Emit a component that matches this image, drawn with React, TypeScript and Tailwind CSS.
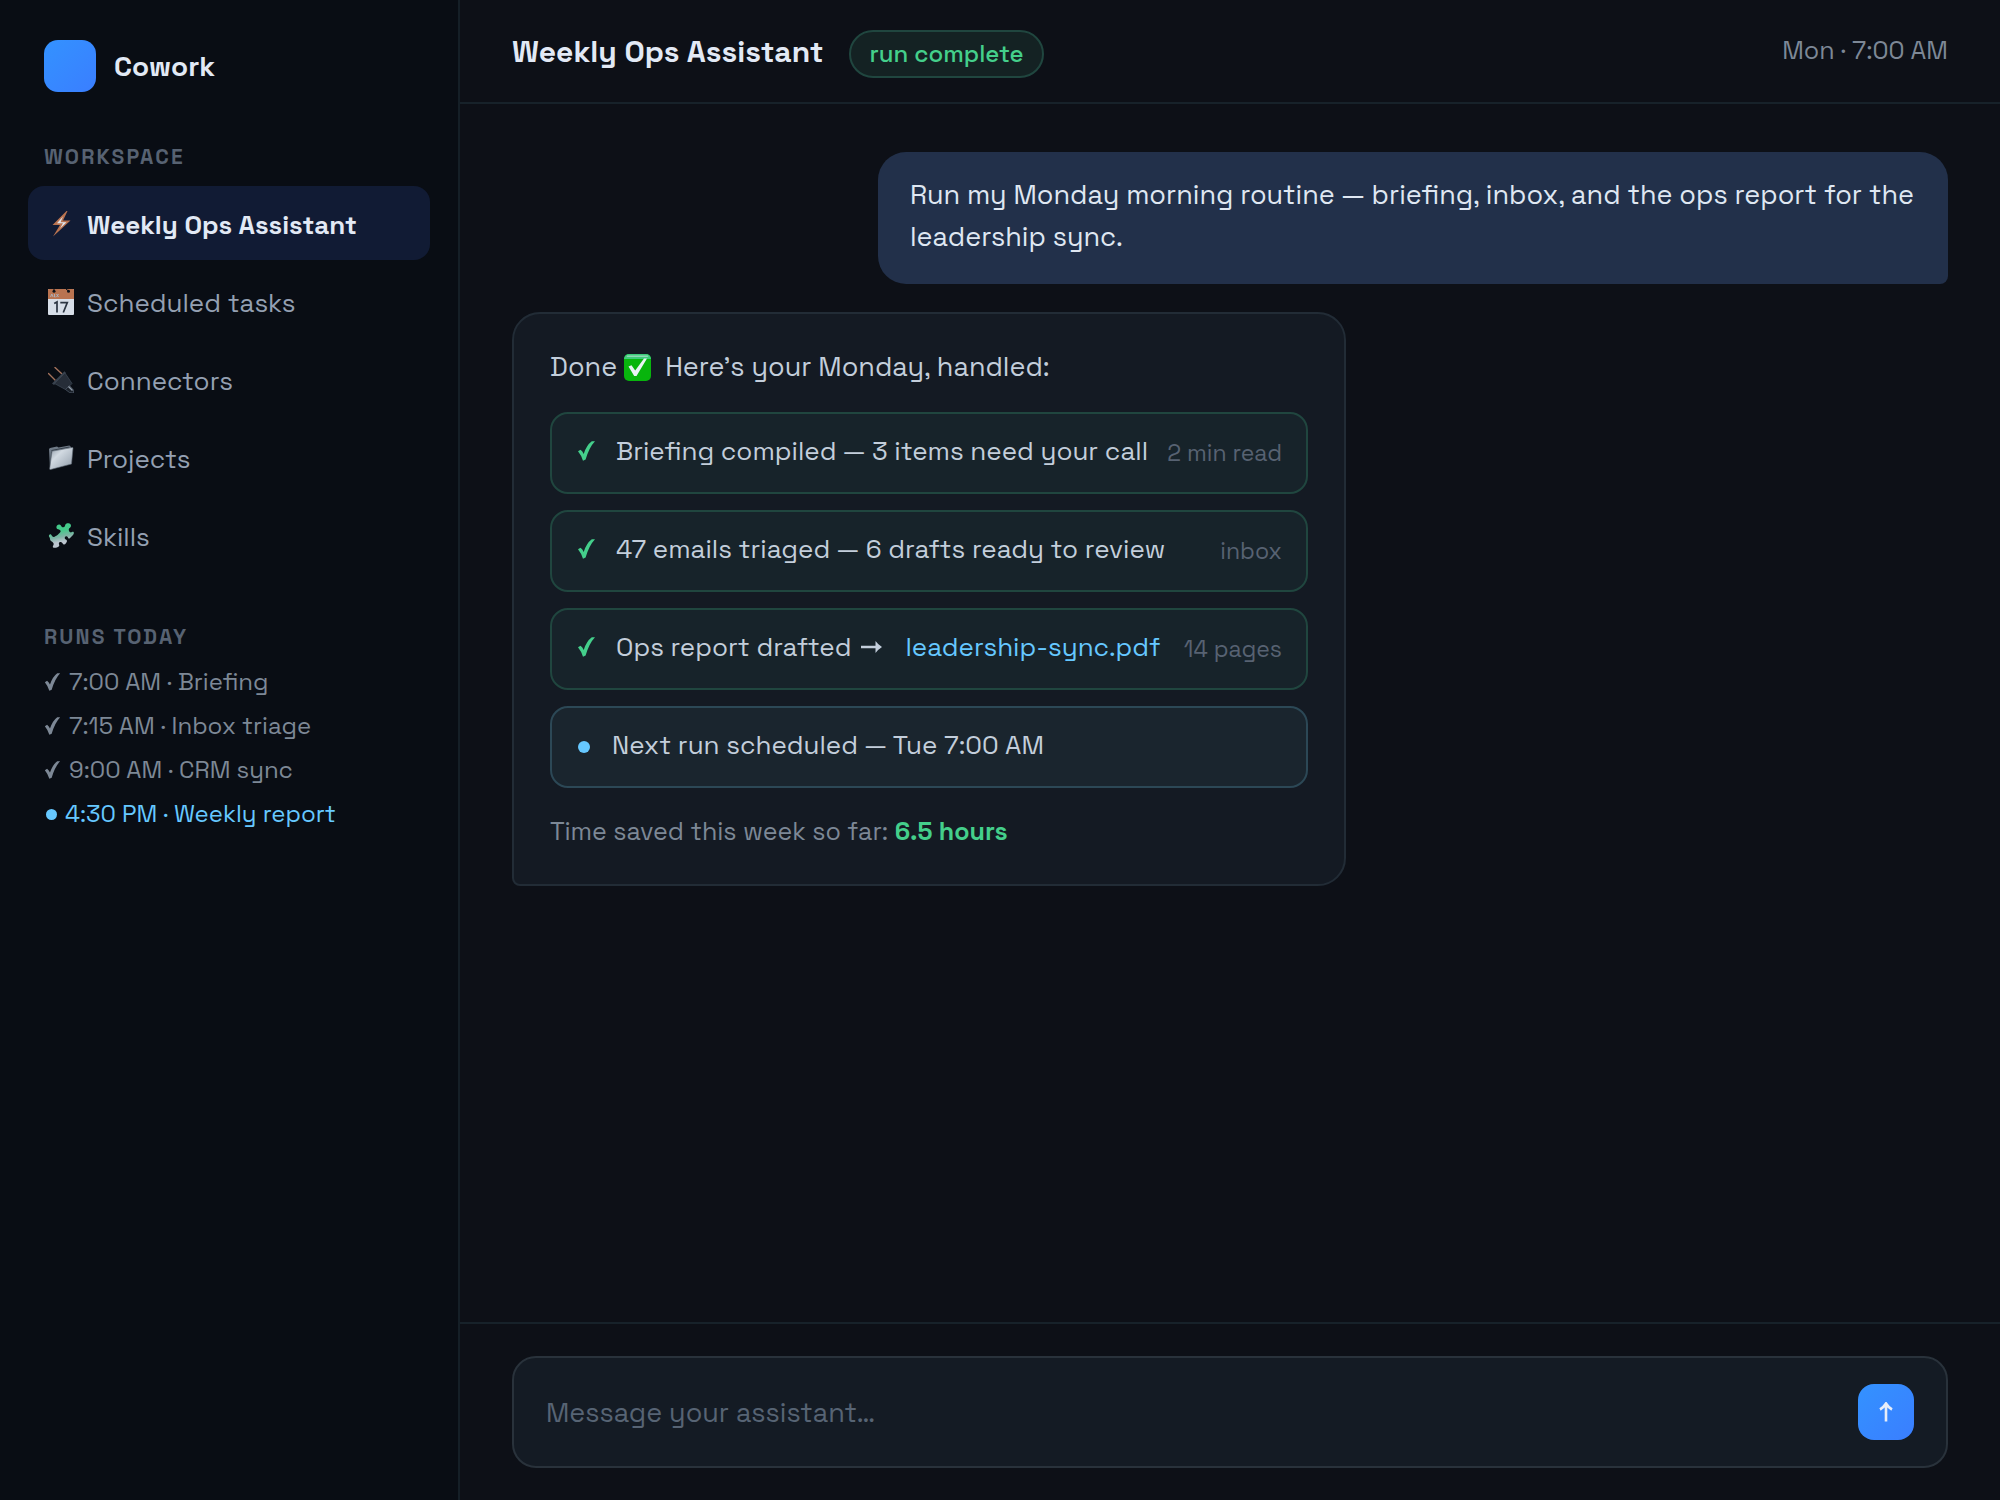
import type { ReactNode } from "react";

function BoltIcon() {
  return (
    <svg viewBox="0 0 26 26" className="size-[26px] shrink-0" aria-hidden="true">
      <path d="M18.5 0 4.5 14h7.500L5 25.500 22.500 9.500h-7.500L19.500 0Z" fill="#b97350" />
      <path d="M15 5.500 9 12.200h6L12 17.500 18.500 11.200h-6Z" fill="#dfe6ef" />
    </svg>
  );
}

function CalendarIcon() {
  return (
    <svg viewBox="0 0 26 26" className="size-[26px] shrink-0" aria-hidden="true">
      <rect width="26" height="26" rx="1" fill="#d7dee8" />
      <path d="M1 0h24a1 1 0 0 1 1 1v9H0V1a1 1 0 0 1 1-1Z" fill="#b97350" />
      <circle cx="6" cy="2.200" r="1.500" fill="#0d1219" />
      <circle cx="20.500" cy="2.200" r="1.500" fill="#0d1219" />
      <path d="M6 0v2M18 0l2.500 2" stroke="#0d1219" strokeWidth="1" />
      <path d="m2.500 8 1.300-3 1.300 3M6.500 5v3h1M8.500 5l2 3m0-3-2 3" stroke="#aab3c0" strokeWidth=".9" fill="none" />
      <path d="M6.200 14.600 9 13v10.500M12.300 13.600h7l-4 9.900" stroke="#2c3542" strokeWidth="1.700" fill="none" />
    </svg>
  );
}

function PlugIcon() {
  return (
    <svg viewBox="0 0 26 26" className="size-[26px] shrink-0" aria-hidden="true">
      <path d="m7 .500 6.500 6M.500 6.500 7 13" stroke="#a4725c" strokeWidth="1.400" strokeLinecap="round" />
      <path d="M16.500 4.200 4 16.500l2 1.500L18 6Z" fill="#39424e" />
      <path d="m17 6 7 10.500-2.500 2.500-4 3.500L6.500 16.500Z" fill="#262d38" stroke="#3b4552" strokeWidth=".8" />
      <path d="m17.500 22.500 4-4 4 4.500v3l-4-.500Z" fill="#1a2029" stroke="#4b5663" strokeWidth=".8" />
      <path d="m20.500 19.500 4 4" stroke="#8f9aa7" strokeWidth="1.400" />
    </svg>
  );
}

function FolderIcon() {
  return (
    <svg viewBox="0 0 26 26" className="size-[26px] shrink-0" aria-hidden="true">
      <defs>
        <linearGradient id="folder-front" x1="0" y1="0" x2="1" y2="1">
          <stop offset="0" stopColor="#8d98a5" />
          <stop offset=".35" stopColor="#d2dae2" />
          <stop offset="1" stopColor="#8f9ba8" />
        </linearGradient>
      </defs>
      <path d="M1 4 2 3l7-1.500 1.500 1 11-2L23 2l-.500 4L4 24l-2-.500Z" fill="#6f7a87" />
      <path d="m3.500 5.500 18-3.500M3.500 6.500 2.500 22" stroke="#343d48" strokeWidth="1" />
      <path d="m4 6.200 20.500-3.700c.4 0 .6.200.5.600L23.500 19 2.500 24.500c-.7 0-.9-.3-.8-.8Z" fill="url(#folder-front)" stroke="#5f6a76" strokeWidth=".6" />
    </svg>
  );
}

function PuzzleIcon() {
  return (
    <svg viewBox="0 0 26 26" className="size-[26px] shrink-0" aria-hidden="true">
      <defs>
        <linearGradient id="puzzle" x1="0.400" y1="0" x2="0.600" y2="1">
          <stop offset=".3" stopColor="#44c98a" />
          <stop offset=".55" stopColor="#7fb3a5" />
          <stop offset=".75" stopColor="#bcc5cf" />
        </linearGradient>
      </defs>
      <path
        d="M1 13.500C.5 12 2.200 10.600 3.200 11.800c.8 1.200 1.600 2.700 3 2.200C8 13.300 12 10.500 12.600 8.600 13 7.200 11.500 6.700 10 6.300 8.300 5.800 8 4 9 2.600c1-1.400 3.200-1.500 3.900-.2.500 1 1.200 1.900 2.400 1.800 1.400-.1 1.700-1.200 1.900-2.200C17.600.4 19.200 0 20.500.2c2 .3 3 2 2.200 3.600-.5 1-1.700 1.300-1.900 2.500-.2 1.300.5 2.500 1.500 3 1.200.6 2-.9 3-.5 1 .5.600 2.200-.3 3.200l-3.200 3.200c-.9.800-1.600 0-2-1-.6-1.500-3-1.100-3.100.7-.1 1.600 2.300 1.600 2.300 3 0 1.300-1.800 3.500-2.900 3.700-1.200.2-1.500-1.800-2.700-2.300-1.500-.6-3 .4-2.400 1.900.4 1 .5 1.600-.3 2.300-1 .9-4.500 1.900-5.500 1-1.200-1.100.9-2.600.4-4C5 19 3.500 18.500 2.500 17.500c-.8-.8 0-2.200-1.500-4Z"
        fill="url(#puzzle)"
      />
    </svg>
  );
}

function TickMark({ className }: { className: string }) {
  return (
    <svg viewBox="0 0 17 20" className={className} aria-hidden="true" fill="currentColor">
      <path d="M0 10.300 2.500 8.700Q4.600 10.300 5.700 12.900Q8.500 4.200 13.800.300L17 .200Q11 6.500 7.600 18.600L5 19.700Q3.400 14.500 0 10.300Z" />
    </svg>
  );
}

function DoneBadge() {
  return (
    <svg viewBox="0 0 27 27" className="size-[27px] shrink-0" aria-hidden="true">
      <rect width="27" height="27" rx="5" fill="#08b50d" />
      <path d="M0 5a5 5 0 0 1 5-5h17a5 5 0 0 1 5 5Z" fill="#3ecb7a" />
      <path d="M3.500 2.200h20" stroke="#8fd7b5" strokeWidth="1.600" strokeLinecap="round" />
      <path d="m4.500 12.500 3-1.300 3.700 5.300L20 4.500h3L12.500 22h-2.300Z" fill="#e8f3f4" />
    </svg>
  );
}

function RightArrow() {
  return (
    <svg viewBox="0 0 21 12" className="ml-2.5 h-3 w-[21px] shrink-0" role="img" aria-label="to" fill="currentColor">
      <path d="M0 4.800h14.500V0Q17 3.500 21 6Q17 8.500 14.500 12V7.200H0Z" />
    </svg>
  );
}

function UpArrow() {
  return (
    <svg viewBox="0 0 14 20" className="h-5 w-3.5" aria-hidden="true" fill="none" stroke="#e6edf9">
      <path d="M7 1.500V19.500M1 7.500Q4.500 5.500 7 1.500Q9.500 5.500 13 7.500" strokeWidth="2.600" />
    </svg>
  );
}

const navItems: { label: string; icon: ReactNode; active?: boolean }[] = [
  { label: "Weekly Ops Assistant", icon: <BoltIcon />, active: true },
  { label: "Scheduled tasks", icon: <CalendarIcon /> },
  { label: "Connectors", icon: <PlugIcon /> },
  { label: "Projects", icon: <FolderIcon /> },
  { label: "Skills", icon: <PuzzleIcon /> },
];

const runs = ["7:00 AM · Briefing", "7:15 AM · Inbox triage", "9:00 AM · CRM sync"];

function Sidebar() {
  return (
    <aside className="flex w-[460px] shrink-0 flex-col border-r-2 border-[#151f27] bg-[#090d14] px-7 pt-10">
      <div className="flex items-center gap-[18px] px-4">
        <div className="size-[52px] rounded-[14px] bg-linear-135 from-[#3392ff] to-[#3a7eff]" />
        <span className="text-[28px] leading-[52px] font-semibold text-[#e2e9f5]">Cowork</span>
      </div>

      <h2 className="mt-[51px] px-4 text-[21px] leading-7 font-semibold tracking-widest text-[#576272]">WORKSPACE</h2>
      <nav className="mt-[15px] flex flex-col gap-1">
        {navItems.map((item) => (
          <a
            key={item.label}
            href="#"
            aria-current={item.active ? "page" : undefined}
            className={
              item.active
                ? "flex h-[74px] items-center gap-[13px] rounded-2xl bg-[#111b34] px-5 pt-0.5 text-[26px] font-semibold text-[#e2e9f5]"
                : "flex h-[74px] items-center gap-[13px] rounded-2xl px-5 pt-0.5 text-[26px] text-[#94a0b2]"
            }
          >
            {item.icon}
            <span className="pt-0.5">{item.label}</span>
          </a>
        ))}
      </nav>

      <h2 className="mt-[51px] px-4 text-[21px] leading-7 font-semibold tracking-widest text-[#576272]">RUNS TODAY</h2>
      <ul className="mt-[9px] px-4 text-2xl leading-[44px] text-[#7d8896]">
        {runs.map((run) => (
          <li key={run} className="flex items-center gap-2">
            <TickMark className="h-[18px] w-[17px] shrink-0" />
            {run}
          </li>
        ))}
        <li className="flex items-center gap-2 text-[#66c8ff]">
          <span className="ml-0.5 size-[11px] shrink-0 rounded-full bg-current" />
          4:30 PM · Weekly report
        </li>
      </ul>
    </aside>
  );
}

function ResultRow({ children, note }: { children: ReactNode; note?: string }) {
  return (
    <li className="flex h-[82px] items-center justify-between rounded-[18px] border-2 border-[#20463f] bg-[#17232a] pr-6 pl-[26px]">
      <span className="flex items-center pb-1 whitespace-nowrap">
        <TickMark className="mr-[21px] h-5 w-[17px] shrink-0 text-[#44cf8b]" />
        {children}
      </span>
      {note && <span className="text-[23px] whitespace-nowrap text-[#576272]">{note}</span>}
    </li>
  );
}

export default function App() {
  return (
    <div className="flex min-h-screen bg-[#0d1017] font-['Space_Grotesk',Inter,sans-serif]">
      <Sidebar />
      <div className="flex min-w-0 flex-1 flex-col">
        <header className="flex h-[104px] items-center border-b-2 border-[#17222a] px-[52px]">
          <h1 className="text-[30px] font-semibold text-[#e2e9f5]">Weekly Ops Assistant</h1>
          <span className="mt-1.5 ml-[26px] rounded-full border-2 border-[#20463f] bg-[#142223] px-[18px] text-2xl leading-[44px] font-medium text-[#44cf8b]">
            run complete
          </span>
          <span className="ml-auto text-[25px] text-[#7d8896]">Mon · 7:00 AM</span>
        </header>

        <main className="flex flex-1 flex-col gap-7 px-[52px] py-12">
          <p className="max-w-[1070px] self-end rounded-[28px] rounded-br-lg bg-[#22304a] px-8 pt-[22px] pb-[26px] text-[27px] leading-[42px] text-[#dfe7f2]">
            Run my Monday morning routine — briefing, inbox, and the ops report for the leadership sync.
          </p>

          <section className="w-full max-w-[834px] self-start rounded-[28px] rounded-bl-lg border-2 border-[#222c36] bg-[#141a23] px-9 pt-8 pb-8 text-[26px] leading-[42px] text-[#c3cedb]">
            <p className="flex items-center text-[27px]">
              Done
              <span className="mr-3.5 ml-[7px]">
                <DoneBadge />
              </span>
              Here’s your Monday, handled:
            </p>
            <ul className="mt-6 flex flex-col gap-4">
              <ResultRow note="2 min read">Briefing compiled — 3 items need your call</ResultRow>
              <ResultRow note="inbox">47 emails triaged — 6 drafts ready to review</ResultRow>
              <ResultRow note="14 pages">
                Ops report drafted
                <RightArrow />
                <a href="#" className="ml-[23px] text-[#66c8ff]">
                  leadership-sync.pdf
                </a>
              </ResultRow>
              <li className="flex h-[82px] items-center rounded-[18px] border-2 border-[#2c4856] bg-[#1a252e] px-[26px]">
                <span className="size-3 shrink-0 rounded-full bg-[#66c8ff]" />
                <span className="ml-[22px] pb-1">Next run scheduled — Tue 7:00 AM</span>
              </li>
            </ul>
            <p className="mt-[22px] text-[25px] leading-[42px] text-[#7d8896]">
              Time saved this week so far: <strong className="font-bold text-[#44cf8b]">6.5 hours</strong>
            </p>
          </section>
        </main>

        <footer className="border-t-2 border-[#17222a] px-[52px] py-8">
          <form
            className="flex h-28 items-center rounded-3xl border-2 border-[#29323b] bg-[#141b24] px-8"
            onSubmit={(event) => event.preventDefault()}
          >
            <input
              type="text"
              aria-label="Message your assistant"
              placeholder="Message your assistant…"
              className="min-w-0 flex-1 bg-transparent pt-0.5 text-[27px] text-[#dfe7f2] outline-none placeholder:text-[#576474]"
            />
            <button
              type="submit"
              aria-label="Send"
              className="flex size-14 items-center justify-center rounded-2xl bg-linear-135 from-[#3392ff] to-[#3a7eff]"
            >
              <UpArrow />
            </button>
          </form>
        </footer>
      </div>
    </div>
  );
}
